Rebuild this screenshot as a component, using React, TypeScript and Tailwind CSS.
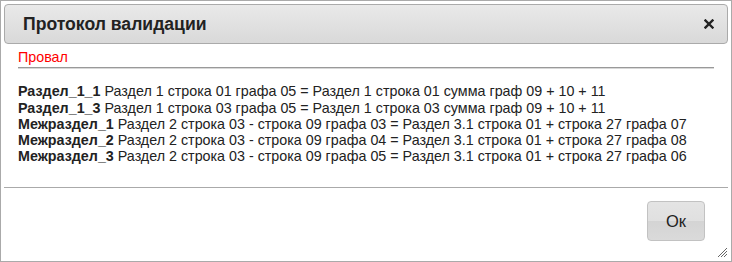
const rows = [
  ['Раздел_1_1', 'Раздел 1 строка 01 графа 05 = Раздел 1 строка 01 сумма граф 09 + 10 + 11'],
  ['Раздел_1_3', 'Раздел 1 строка 03 графа 05 = Раздел 1 строка 03 сумма граф 09 + 10 + 11'],
  ['Межраздел_1', 'Раздел 2 строка 03 - строка 09 графа 03 = Раздел 3.1 строка 01 + строка 27 графа 07'],
  ['Межраздел_2', 'Раздел 2 строка 03 - строка 09 графа 04 = Раздел 3.1 строка 01 + строка 27 графа 08'],
  ['Межраздел_3', 'Раздел 2 строка 03 - строка 09 графа 05 = Раздел 3.1 строка 01 + строка 27 графа 06'],
]

export default function App() {
  return (
    <div className="relative w-[732px] h-[262px] border border-[#aaa] bg-white p-[3px] flex flex-col font-['Liberation_Sans',Arial,sans-serif] text-[#222]">
      {/* заголовок */}
      <div className="h-[40px] shrink-0 flex items-center justify-between rounded-[4px] border border-[#aaa] bg-gradient-to-b from-[#e9e9e9] to-[#d9d9d9] pl-[18px] pr-[10px]">
        <span className="text-[17.6px] font-bold text-[#222]">Протокол валидации</span>
        <button className="w-[16px] h-[16px] grid place-items-center" aria-label="close">
          <svg width="10" height="10" viewBox="0 0 10 10">
            <path d="M1.5 1.5 L8.5 8.5 M8.5 1.5 L1.5 8.5" stroke="#222" strokeWidth="2.4" strokeLinecap="square" />
          </svg>
        </button>
      </div>

      {/* содержимое */}
      <div className="flex-1 px-[14px] pt-[5px] text-[14.3px] leading-[16.25px]">
        <div className="text-[#f00]">Провал</div>
        <div className="mt-[2px] h-[2px] border-t border-[#999] bg-[#d8d8d8]" />
        <div className="mt-[14px]">
          {rows.map(([k, v]) => (
            <div key={k} className="whitespace-nowrap">
              <b className="font-bold">{k}</b> {v}
            </div>
          ))}
        </div>
      </div>

      {/* кнопки */}
      <div className="h-[71px] shrink-0 border-t border-[#aaa] flex justify-end items-start pt-[13px] pr-[23px]">
        <button className="w-[58px] h-[40px] rounded-[4px] border border-[#c2c2c2] bg-[linear-gradient(to_bottom,#e4e4e4_0%,#e0e0e0_50%,#d4d4d4_51%,#dadada_100%)] text-[16.5px] text-[#222]">
          Ок
        </button>
      </div>

      <svg className="absolute right-[3px] bottom-[3px]" width="11" height="11" viewBox="0 0 11 11">
        <path d="M10 1 L1 10 M10 4 L4 10 M10 7 L7 10" stroke="#666" strokeWidth="1" />
      </svg>
    </div>
  )
}
